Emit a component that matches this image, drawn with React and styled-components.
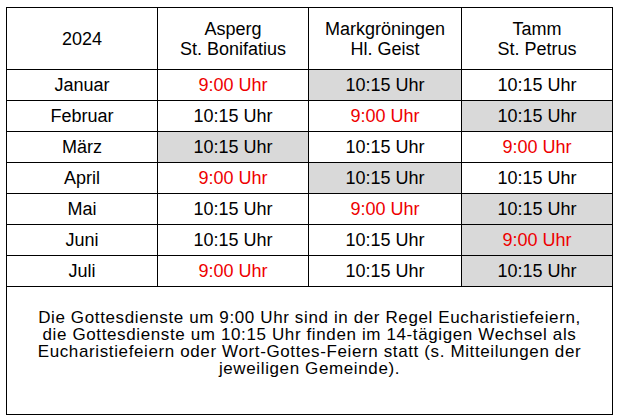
import styled, { createGlobalStyle } from 'styled-components';

const GlobalStyle = createGlobalStyle`
  html, body {
    margin: 0;
    padding: 0;
    background: #ffffff;
  }
  body {
    font-family: "Liberation Sans", Arial, sans-serif;
    color: #000000;
  }
`;

const Page = styled.div`
  padding: 7px 6px 0;
`;

const Table = styled.table`
  width: 606px;
  border-collapse: collapse;
  table-layout: fixed;
  border: 1px solid #000;
`;

const Col = styled.col`
  width: ${(p) => p.$w}px;
`;

const Cell = styled.td`
  box-sizing: border-box;
  border: 1px solid #000;
  height: 31px;
  padding: 0;
  text-align: center;
  vertical-align: middle;
  font-size: 18px;
  line-height: 20px;
  color: ${(p) => (p.$red ? '#ee0000' : '#000')};
  background: ${(p) => (p.$shaded ? '#d9d9d9' : '#ffffff')};
`;

const HeadCell = styled(Cell)`
  height: 62px;
`;

const NoteCell = styled.td`
  box-sizing: border-box;
  border: 1px solid #000;
  height: 128px;
  padding: 22px 0 0;
  vertical-align: top;
  text-align: center;
  font-size: 17px;
  letter-spacing: 0.62px;
  line-height: 17px;
`;

const parishes = [
  ['Asperg', 'St. Bonifatius'],
  ['Markgröningen', 'Hl. Geist'],
  ['Tamm', 'St. Petrus'],
];

// [time, shaded] per parish
const rows = [
  ['Januar', ['9:00', false], ['10:15', true], ['10:15', false]],
  ['Februar', ['10:15', false], ['9:00', false], ['10:15', true]],
  ['März', ['10:15', true], ['10:15', false], ['9:00', false]],
  ['April', ['9:00', false], ['10:15', true], ['10:15', false]],
  ['Mai', ['10:15', false], ['9:00', false], ['10:15', true]],
  ['Juni', ['10:15', false], ['10:15', false], ['9:00', true]],
  ['Juli', ['9:00', false], ['10:15', false], ['10:15', true]],
];

export default function App() {
  return (
    <>
      <GlobalStyle />
      <Page>
        <Table>
          <colgroup>
            <Col $w={151} />
            <Col $w={151} />
            <Col $w={153} />
            <Col $w={151} />
          </colgroup>
          <tbody>
            <tr>
              <HeadCell>2024</HeadCell>
              {parishes.map(([town, church]) => (
                <HeadCell key={town}>
                  {town}
                  <br />
                  {church}
                </HeadCell>
              ))}
            </tr>
            {rows.map(([month, ...times]) => (
              <tr key={month}>
                <Cell>{month}</Cell>
                {times.map(([time, shaded], i) => (
                  <Cell key={i} $red={time === '9:00'} $shaded={shaded}>
                    {time} Uhr
                  </Cell>
                ))}
              </tr>
            ))}
            <tr>
              <NoteCell colSpan={4}>
                Die Gottesdienste um 9:00 Uhr sind in der Regel Eucharistiefeiern,
                <br />
                die Gottesdienste um 10:15 Uhr finden im 14-tägigen Wechsel als
                <br />
                Eucharistiefeiern oder Wort-Gottes-Feiern statt (s. Mitteilungen der
                <br />
                jeweiligen Gemeinde).
              </NoteCell>
            </tr>
          </tbody>
        </Table>
      </Page>
    </>
  );
}
